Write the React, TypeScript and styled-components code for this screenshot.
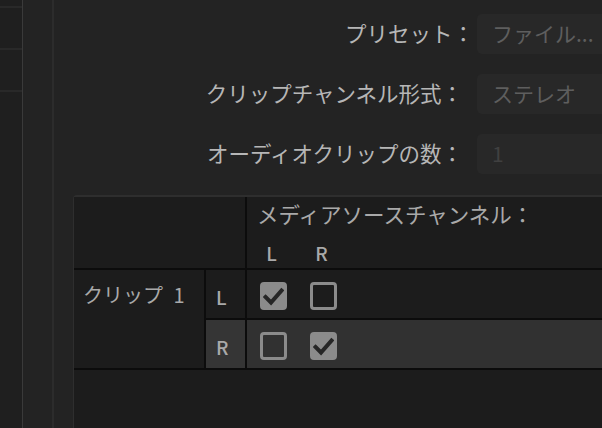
import React from 'react';
import styled, { createGlobalStyle } from 'styled-components';

const Global = createGlobalStyle`
  html, body {
    margin: 0;
    padding: 0;
    background: #232323;
    overflow: hidden;
  }
  body {
    font-family: "Noto Sans CJK JP", "Noto Sans", sans-serif;
  }
`;

const Page = styled.div`
  display: flex;
  width: 602px;
  height: 428px;
  overflow: hidden;
  background: #232323;
`;

const OuterRail = styled.div`
  flex: none;
  width: 22px;
  background: #1f1f1f;
  border-right: 1px solid #3a3a3a;
  padding-top: 6px;
  display: flex;
  flex-direction: column;
`;

const RailSlot = styled.div`
  height: 42px;
  box-sizing: border-box;
  border-top: 2px solid #292929;
`;

const InnerRail = styled.div`
  flex: none;
  width: 29px;
  background: #232323;
  border-right: 2px solid #2c2c2c;
`;

const Main = styled.div`
  flex: 1;
  min-width: 0;
  display: flex;
  flex-direction: column;
  padding-top: 14px;
  overflow: hidden;
`;

const Form = styled.div`
  display: grid;
  grid-template-columns: 420px 200px;
  grid-auto-rows: 40px;
  column-gap: 3px;
  row-gap: 20px;
`;

const Label = styled.div<{ $nudge?: number }>`
  display: flex;
  align-items: center;
  justify-content: flex-end;
  padding-right: ${(p) => p.$nudge ?? 0}px;
  padding-bottom: 4px;
  font-size: 21.5px;
  color: #b6b6b6;
  white-space: nowrap;
`;

const Field = styled.div<{ $dim?: boolean }>`
  display: flex;
  align-items: center;
  background: #282828;
  border-radius: 5px;
  padding: 0 0 2px 15px;
  font-size: 21px;
  color: ${(p) => (p.$dim ? '#404040' : '#5e5e5e')};
  white-space: nowrap;
`;

const Table = styled.div`
  flex: 1;
  margin-top: 21px;
  margin-left: 19px;
  background: #1c1c1c;
  border-top: 2px solid #2e2e2e;
  border-left: 1px solid #2e2e2e;
  border-top-left-radius: 4px;
`;

const Grid = styled.div`
  display: grid;
  grid-template-columns: 130px 39px 1fr;
  grid-template-rows: 71px 48px 48px;
  gap: 2px;
  background: #0c0c0c;
  border-bottom: 2px solid #0c0c0c;
`;

const Cell = styled.div<{ $tone?: 'base' | 'alt' | 'key' }>`
  background: ${(p) =>
    p.$tone === 'alt' ? '#313131' : p.$tone === 'key' ? '#353535' : '#1c1c1c'};
  color: #a9a9a9;
`;

const HeaderBlank = styled(Cell)`
  grid-column: 1 / 3;
`;

const HeaderChannels = styled(Cell)`
  display: flex;
  flex-direction: column;
  padding: 2px 0 0 10px;
`;

const HeaderTitle = styled.div`
  font-size: 21.5px;
  line-height: 30px;
  white-space: nowrap;
`;

const ChannelRow = styled.div`
  display: flex;
  gap: 23px;
  padding-left: 1px;
  margin-top: 12px;
`;

const ChannelLetter = styled.div`
  width: 27px;
  text-align: center;
  font-size: 19px;
  font-weight: 500;
  line-height: 24px;
`;

const ClipName = styled(Cell)`
  grid-row: 2 / 4;
  padding: 10px 0 0 9px;
  font-size: 20px;
  line-height: 30px;
  word-spacing: 6px;
  white-space: nowrap;
`;

const RowKey = styled(Cell)`
  display: flex;
  align-items: center;
  padding: 4px 0 0 10px;
  font-size: 19px;
  font-weight: 500;
`;

const BoxRow = styled(Cell)`
  display: flex;
  align-items: center;
  gap: 23px;
  padding: 4px 0 0 13px;
`;

const Box = styled.div<{ $on?: boolean }>`
  width: 27px;
  height: 28px;
  box-sizing: border-box;
  border-radius: 4px;
  border: 3px solid #8b8b8b;
  background: ${(p) => (p.$on ? '#8b8b8b' : 'transparent')};
  display: flex;
  align-items: center;
  justify-content: center;
`;

const Check = () => (
  <svg width="21" height="22" viewBox="3 3 21 22" fill="none">
    <path
      d="M5.5 15 L11 20.5 L21.5 8.5"
      stroke="#262626"
      strokeWidth="4"
      strokeLinecap="square"
      strokeLinejoin="miter"
    />
  </svg>
);

const CheckBox = ({ on }: { on?: boolean }) => <Box $on={on}>{on && <Check />}</Box>;

export default function App() {
  return (
    <>
      <Global />
      <Page>
        <OuterRail>
          <RailSlot />
          <RailSlot />
          <RailSlot />
        </OuterRail>
        <InnerRail />
        <Main>
          <Form>
            <Label>プリセット：</Label>
            <Field>ファイル...</Field>
            <Label $nudge={11}>クリップチャンネル形式：</Label>
            <Field>ステレオ</Field>
            <Label $nudge={11}>オーディオクリップの数：</Label>
            <Field $dim>1</Field>
          </Form>
          <Table>
            <Grid>
              <HeaderBlank />
              <HeaderChannels>
                <HeaderTitle>メディアソースチャンネル：</HeaderTitle>
                <ChannelRow>
                  <ChannelLetter>L</ChannelLetter>
                  <ChannelLetter>R</ChannelLetter>
                </ChannelRow>
              </HeaderChannels>
              <ClipName>クリップ 1</ClipName>
              <RowKey>L</RowKey>
              <BoxRow>
                <CheckBox on />
                <CheckBox />
              </BoxRow>
              <RowKey $tone="key">R</RowKey>
              <BoxRow $tone="alt">
                <CheckBox />
                <CheckBox on />
              </BoxRow>
            </Grid>
          </Table>
        </Main>
      </Page>
    </>
  );
}
